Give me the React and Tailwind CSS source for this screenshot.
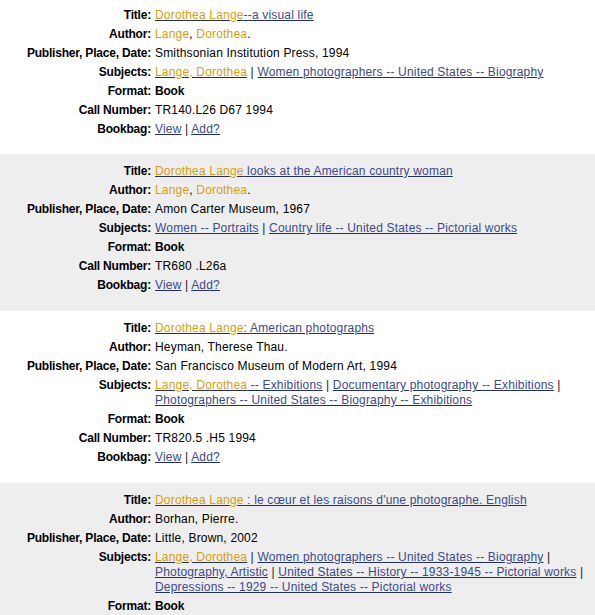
import React from "react";

const L = ({ children }) => (
  <a href="#" className="text-[#3c4a8e] underline decoration-[#22306a]">
    {children}
  </a>
);
const H = ({ children }) => <span className="text-[#d99e0b]">{children}</span>;
const Sep = () => <span className="text-[#222222]">{" | "}</span>;

const Row = ({ label, children }) => (
  <>
    <div className="py-[2px] pr-[2px] text-right font-bold tracking-[-0.2px] text-black whitespace-nowrap">
      {label}
    </div>
    <div className="py-[2px] pl-[2px] pr-[4px] tracking-[0.18px] text-black">
      {children}
    </div>
  </>
);

const Record = ({ gray, first, children }) => (
  <div
    className={
      (gray ? "bg-[#eeeeee] " : "bg-white ") +
      (first ? "pt-[6px] pb-[15px]" : "pt-[8px] pb-[16px]")
    }
  >
    <div className="grid grid-cols-[153px_1fr]">{children}</div>
  </div>
);

const Bookbag = () => (
  <Row label="Bookbag:">
    <L>View</L>
    <Sep />
    <L>Add?</L>
  </Row>
);

const Book = () => (
  <Row label="Format:">
    <span className="font-bold tracking-[-0.2px]">Book</span>
  </Row>
);

export default function App() {
  return (
    <div className="w-[595px] h-[615px] overflow-hidden bg-white font-['Liberation_Sans',Arial,sans-serif] text-[12px] leading-[15px] text-black">
      <Record first>
        <Row label="Title:">
          <L>
            <H>Dorothea Lange</H>--a visual life
          </L>
        </Row>
        <Row label="Author:">
          <H>Lange</H>, <H>Dorothea</H>.
        </Row>
        <Row label="Publisher, Place, Date:">Smithsonian Institution Press, 1994</Row>
        <Row label="Subjects:">
          <L>
            <H>Lange, Dorothea</H>
          </L>
          <Sep />
          <L>Women photographers -- United States -- Biography</L>
        </Row>
        <Book />
        <Row label="Call Number:">TR140.L26 D67 1994</Row>
        <Bookbag />
      </Record>

      <Record gray>
        <Row label="Title:">
          <L>
            <H>Dorothea Lange</H> looks at the American country woman
          </L>
        </Row>
        <Row label="Author:">
          <H>Lange</H>, <H>Dorothea</H>.
        </Row>
        <Row label="Publisher, Place, Date:">Amon Carter Museum, 1967</Row>
        <Row label="Subjects:">
          <L>Women -- Portraits</L>
          <Sep />
          <L>Country life -- United States -- Pictorial works</L>
        </Row>
        <Book />
        <Row label="Call Number:">TR680 .L26a</Row>
        <Bookbag />
      </Record>

      <Record>
        <Row label="Title:">
          <L>
            <H>Dorothea Lange</H>: American photographs
          </L>
        </Row>
        <Row label="Author:">Heyman, Therese Thau.</Row>
        <Row label="Publisher, Place, Date:">San Francisco Museum of Modern Art, 1994</Row>
        <Row label="Subjects:">
          <L>
            <H>Lange, Dorothea</H> -- Exhibitions
          </L>
          <Sep />
          <L>Documentary photography -- Exhibitions</L>
          <Sep />
          <L>Photographers -- United States -- Biography -- Exhibitions</L>
        </Row>
        <Book />
        <Row label="Call Number:">TR820.5 .H5 1994</Row>
        <Bookbag />
      </Record>

      <Record gray>
        <Row label="Title:">
          <L>
            <H>Dorothea Lange</H> : le cœur et les raisons d'une photographe. English
          </L>
        </Row>
        <Row label="Author:">Borhan, Pierre.</Row>
        <Row label="Publisher, Place, Date:">Little, Brown, 2002</Row>
        <Row label="Subjects:">
          <L>
            <H>Lange, Dorothea</H>
          </L>
          <Sep />
          <L>Women photographers -- United States -- Biography</L>
          <Sep />
          <L>Photography, Artistic</L>
          <Sep />
          <L>United States -- History -- 1933-1945 -- Pictorial works</L>
          <Sep />
          <L>Depressions -- 1929 -- United States -- Pictorial works</L>
        </Row>
        <Book />
      </Record>
    </div>
  );
}
